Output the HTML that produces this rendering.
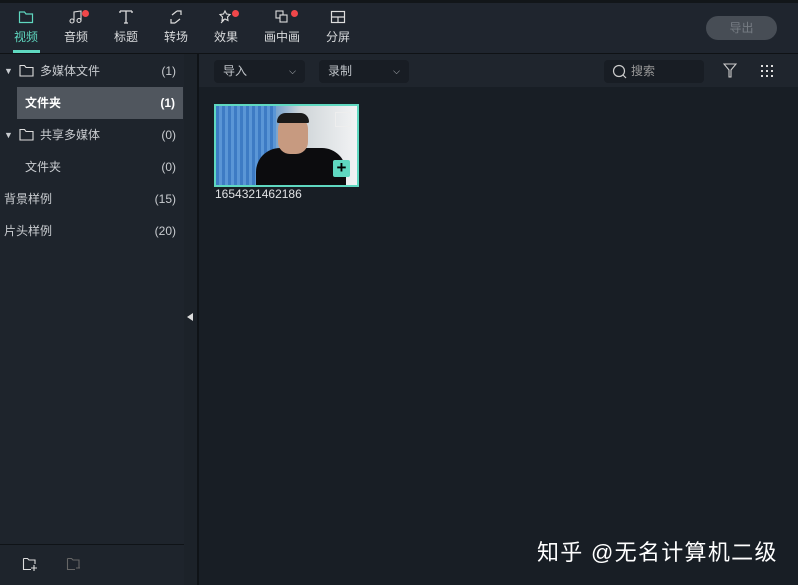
<!DOCTYPE html>
<html><head><meta charset="utf-8"><style>
*{margin:0;padding:0;box-sizing:border-box}
body{width:798px;height:585px;background:#181e25;font-family:"Liberation Sans","Noto Sans CJK SC",sans-serif;color:#c9ccd0;position:relative;overflow:hidden;font-size:12px}
.abs{position:absolute}
#top{left:0;top:0;width:798px;height:54px;background:#1f252e;border-top:3px solid #121619;border-bottom:1px solid #0f1215}
.tab{position:absolute;top:6px;width:40px;text-align:center;font-size:12px;color:#d8dadc}
.tab svg{display:block;margin:0 auto 3px}
.dot{position:absolute;width:7px;height:7px;border-radius:50%;background:#f0474a}
#left{left:0;top:54px;width:184px;height:531px;background:#1e242c}
#strip{left:184px;top:54px;width:13px;height:531px;background:#1c2229}
#sep{left:197px;top:54px;width:2px;height:531px;background:#0f1317}
#tool{left:199px;top:54px;width:599px;height:33px;background:#1f252d}
.row{position:absolute;left:0;width:184px;height:32px;line-height:32px;font-size:12px}
.row .c{position:absolute;right:8px;top:0}
.dd{position:absolute;top:60px;height:23px;background:#181d24;border-radius:4px;font-size:12px;line-height:23px;padding-left:9px;color:#bfc3c8}
</style></head><body>
<div id="top" class="abs">
 <div class="tab" style="left:6px;color:#5fd8c0"><svg width="16" height="16" viewBox="0 0 16 16"><path d="M1.5 3h5l1.5 2h6.5v8.5h-13z" fill="none" stroke="#5fd8c0" stroke-width="1.2"/></svg>视频</div>
 <div class="abs" style="left:13px;top:47px;width:27px;height:3px;background:#5fd8c0"></div>
 <div class="tab" style="left:56px"><svg width="16" height="16" viewBox="0 0 16 16"><circle cx="4" cy="12" r="2" fill="none" stroke="#ddd" stroke-width="1.1"/><circle cx="11" cy="11.5" r="2" fill="none" stroke="#ddd" stroke-width="1.1"/><path d="M6 12V3l7-1v9.5" fill="none" stroke="#ddd" stroke-width="1.1"/></svg>音频</div>
 <div class="dot" style="left:82px;top:7px"></div>
 <div class="tab" style="left:106px"><svg width="16" height="16" viewBox="0 0 16 16"><path d="M2 2h12M8 2v12M2 2v2M14 2v2M6 14h4" fill="none" stroke="#ddd" stroke-width="1.3"/></svg>标题</div>
 <div class="tab" style="left:156px"><svg width="16" height="16" viewBox="0 0 16 16"><path d="M4 6l5-4M9 2h4v4M12 10l-5 4M7 14H3v-4" fill="none" stroke="#ddd" stroke-width="1.2"/></svg>转场</div>
 <div class="tab" style="left:206px"><svg width="16" height="16" viewBox="0 0 16 16"><path d="M7 2l1.5 3 3.5.5-2.5 2.5.5 3.5-3-1.5-3 1.5.5-3.5L2 5.5 5.5 5zM3 14l3-3" fill="none" stroke="#ddd" stroke-width="1.1"/></svg>效果</div>
 <div class="dot" style="left:232px;top:7px"></div>
 <div class="tab" style="left:262px"><svg width="16" height="16" viewBox="0 0 16 16"><rect x="2" y="2" width="7" height="7" fill="none" stroke="#ddd" stroke-width="1.1"/><rect x="6" y="6" width="7" height="7" fill="#1f252e" stroke="#ddd" stroke-width="1.1"/></svg>画中画</div>
 <div class="dot" style="left:291px;top:7px"></div>
 <div class="tab" style="left:318px"><svg width="16" height="16" viewBox="0 0 16 16"><rect x="1.5" y="2.5" width="13" height="11" fill="none" stroke="#ddd" stroke-width="1.2"/><path d="M1.5 8h13M8 8v5.5" stroke="#ddd" stroke-width="1.2"/></svg>分屏</div>
 <div class="abs" style="left:706px;top:13px;width:71px;height:24px;border-radius:12px;background:#474d55;color:#767c83;text-align:center;line-height:24px;font-size:12px">导出</div>
</div>
<div id="left" class="abs">
 <div class="row" style="top:1px"><span style="position:absolute;left:4px;font-size:9px">▼</span><svg class="abs" style="left:19px;top:9px" width="15" height="13" viewBox="0 0 15 13"><path d="M1 1.5h4.5l1.5 2h7v8.5H1z" fill="none" stroke="#ddd" stroke-width="1.1"/></svg><span style="position:absolute;left:40px">多媒体文件</span><span class="c">(1)</span></div>
 <div class="row" style="top:33px;left:17px;width:166px;background:#50565e;color:#fff;font-weight:bold"><span style="position:absolute;left:8px">文件夹</span><span class="c">(1)</span></div>
 <div class="row" style="top:65px"><span style="position:absolute;left:4px;font-size:9px">▼</span><svg class="abs" style="left:19px;top:9px" width="15" height="13" viewBox="0 0 15 13"><path d="M1 1.5h4.5l1.5 2h7v8.5H1z" fill="none" stroke="#ddd" stroke-width="1.1"/></svg><span style="position:absolute;left:40px">共享多媒体</span><span class="c">(0)</span></div>
 <div class="row" style="top:97px"><span style="position:absolute;left:25px">文件夹</span><span class="c">(0)</span></div>
 <div class="row" style="top:129px"><span style="position:absolute;left:4px">背景样例</span><span class="c">(15)</span></div>
 <div class="row" style="top:161px"><span style="position:absolute;left:4px">片头样例</span><span class="c">(20)</span></div>
 <div class="abs" style="left:0;top:490px;width:184px;height:1px;background:#0f1317"></div>
 <svg class="abs" style="left:22px;top:502px" width="16" height="16" viewBox="0 0 16 16"><path d="M1.5 2.5h4l1.5 1.5h6v4M9 13.5H1.5v-11M12 9v6M9 12h6" fill="none" stroke="#ddd" stroke-width="1.1"/></svg>
 <svg class="abs" style="left:66px;top:502px" width="16" height="16" viewBox="0 0 16 16"><path d="M1.5 2.5h4l1.5 1.5h6v8M9 13.5H1.5v-11M10 12h4" fill="none" stroke="#666" stroke-width="1.1"/></svg>
</div>
<div id="strip" class="abs"><div class="abs" style="left:3px;top:259px;width:0;height:0;border-top:4px solid transparent;border-bottom:4px solid transparent;border-right:6px solid #ddd"></div></div>
<div id="sep" class="abs"></div>
<div id="tool" class="abs"></div>
<div class="dd" style="left:214px;width:91px">导入<span style="position:absolute;right:9px;font-size:9px">⌵</span></div>
<div class="dd" style="left:319px;width:90px">录制<span style="position:absolute;right:9px;font-size:9px">⌵</span></div>
<div class="dd" style="left:604px;width:100px;padding-left:27px;color:#999">搜索<svg class="abs" style="left:8px;top:4px" width="15" height="15" viewBox="0 0 15 15"><circle cx="7" cy="7" r="5.5" fill="none" stroke="#ccc" stroke-width="1.2"/><path d="M11 11l3 3" stroke="#ccc" stroke-width="1.2"/></svg></div>
<svg class="abs" style="left:723px;top:63px" width="14" height="15" viewBox="0 0 14 15"><path d="M1 1h12L8 7v7H6V7z" fill="none" stroke="#ccc" stroke-width="1.1"/></svg>
<svg class="abs" style="left:761px;top:65px" width="13" height="13"><g fill="#ddd"><rect x="0" y="0" width="2" height="2"/><rect x="5" y="0" width="2" height="2"/><rect x="10" y="0" width="2" height="2"/><rect x="0" y="5" width="2" height="2"/><rect x="5" y="5" width="2" height="2"/><rect x="10" y="5" width="2" height="2"/><rect x="0" y="10" width="2" height="2"/><rect x="5" y="10" width="2" height="2"/><rect x="10" y="10" width="2" height="2"/></g></svg>
<div class="abs" style="left:214px;top:104px;width:145px;height:83px;border:2px solid #5fd8c0;overflow:hidden;background:linear-gradient(90deg,#3b7fc6 0%,#4a8fd4 30%,#6b9ccc 40%,#cfd5d8 60%,#e5e8ea 85%,#f2f3f4 100%)">
 <div class="abs" style="left:0;top:0;width:60px;height:83px;background:repeating-linear-gradient(90deg,#3d7bc4 0 3px,#5a96d6 3px 6px)"></div>
 <div class="abs" style="left:40px;top:42px;width:90px;height:45px;background:#0c0c0e;border-radius:24px 24px 0 0"></div>
 <div class="abs" style="left:62px;top:10px;width:30px;height:38px;background:#c79a80;border-radius:13px 13px 12px 12px"></div>
 <div class="abs" style="left:61px;top:7px;width:32px;height:10px;background:#1a1a1a;border-radius:13px 13px 2px 2px"></div>
 <div class="abs" style="left:119px;top:6px;width:16px;height:15px;border:1px solid #eee"></div>
 <div class="abs" style="left:117px;top:54px;width:17px;height:17px;background:#5fd8c0;border-radius:2px;color:#000;font-size:17px;line-height:16px;text-align:center;font-weight:bold">+</div>
</div>
<div class="abs" style="left:215px;top:187px;font-size:12px;color:#e0e2e4">1654321462186</div>
<div class="abs" style="left:537px;top:535px;font-size:22px;letter-spacing:1.3px;color:#fff">知乎 @无名计算机二级</div>
</body></html>
